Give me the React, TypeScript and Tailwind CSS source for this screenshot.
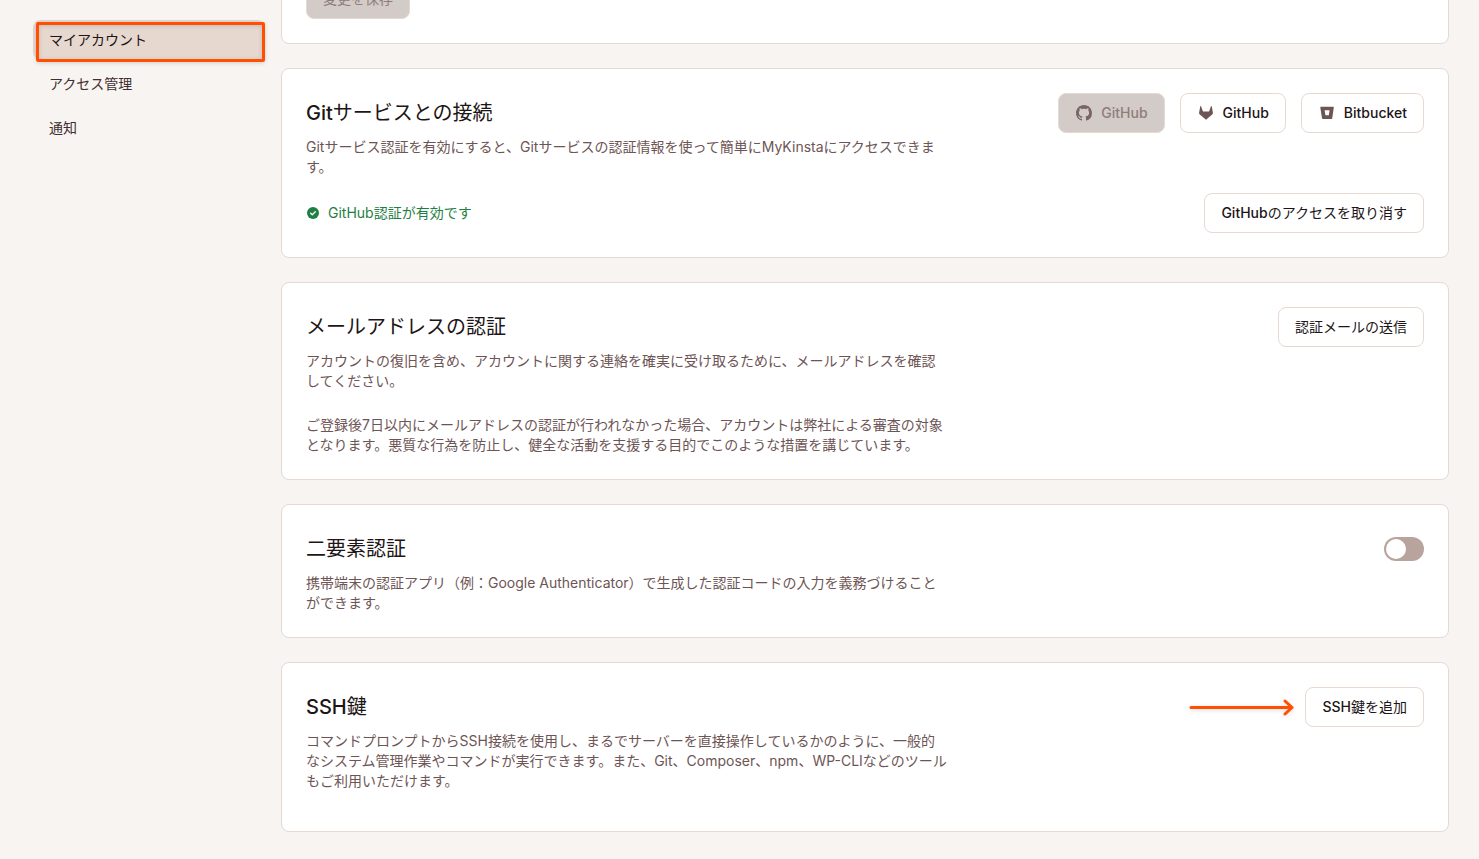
import { useState } from "react";
import type { ReactNode } from "react";

const navItems = [
  { label: "マイアカウント", active: true },
  { label: "アクセス管理", active: false },
  { label: "通知", active: false },
];

function GitHubIcon() {
  return (
    <svg className="h-[18px] w-[18px] text-[#7b6464]" viewBox="-1 -1 18 18" fill="currentColor" aria-hidden="true">
      <path d="M8 0C3.58 0 0 3.58 0 8c0 3.54 2.29 6.53 5.47 7.59.4.07.55-.17.55-.38 0-.19-.01-.82-.01-1.49-2.01.37-2.53-.49-2.69-.94-.09-.23-.48-.94-.82-1.13-.28-.15-.68-.52-.01-.53.63-.01 1.08.58 1.23.82.72 1.21 1.87.87 2.33.66.07-.52.28-.87.51-1.07-1.78-.2-3.64-.89-3.64-3.95 0-.87.31-1.59.82-2.15-.08-.2-.36-1.02.08-2.12 0 0 .67-.21 2.2.82.64-.18 1.32-.27 2-.27s1.36.09 2 .27c1.53-1.04 2.2-.82 2.2-.82.44 1.1.16 1.92.08 2.12.51.56.82 1.27.82 2.15 0 3.07-1.87 3.75-3.65 3.95.29.25.54.73.54 1.48 0 1.07-.01 1.93-.01 2.2 0 .21.15.46.55.38A8.01 8.01 0 0 0 16 8c0-4.42-3.58-8-8-8z" />
    </svg>
  );
}

function GitLabIcon() {
  return (
    <svg className="h-[18px] w-[18px] text-[#6e5555]" viewBox="0 0 18 18" fill="currentColor" aria-hidden="true">
      <path d="M3.3 2.3c.1-.3.6-.3.7 0l2 5.3h6l2-5.3c.1-.3.6-.3.7 0l1.2 6.1c.2.8-.1 1.500-.7 2L9 15.700l-6.200-5.300c-.6-.5-.9-1.200-.7-2z" />
    </svg>
  );
}

function BitbucketIcon() {
  return (
    <svg className="h-[18px] w-[18px] text-[#6e5555]" viewBox="0 0 18 18" fill="currentColor" aria-hidden="true">
      <path
        fillRule="evenodd"
        d="M2.8 2.8h12.600c.3 0 .5.300.4.600l-1.600 11c0 .3-.3.500-.6.500H4.800c-.4 0-.7-.3-.8-.7L2.300 3.400c0-.3.200-.6.500-.6zM6.600 6.300l.8 5h3.400l.8-5z"
      />
    </svg>
  );
}

function CheckCircle() {
  return (
    <svg className="h-3.5 w-3.5" viewBox="0 0 14 14" fill="none" aria-hidden="true">
      <circle cx="7" cy="7" r="6" fill="#1f7f43" />
      <path d="M4.7 7.2l1.6 1.5 3-3" stroke="white" strokeWidth="1.3" strokeLinecap="round" strokeLinejoin="round" />
    </svg>
  );
}

function Arrow() {
  return (
    <svg
      className="h-5 w-[106px] drop-shadow-sm"
      viewBox="0 0 106 20"
      fill="none"
      stroke="#ff4f00"
      strokeWidth="3"
      strokeLinecap="round"
      strokeLinejoin="round"
      aria-hidden="true"
    >
      <path d="M2 10.5h101M96 4l7 6.5-7 6.5" />
    </svg>
  );
}

interface ButtonProps {
  children: ReactNode;
  icon?: ReactNode;
  disabled?: boolean;
}

function Button({ children, icon, disabled }: ButtonProps) {
  return (
    <button
      type="button"
      disabled={disabled}
      className={`flex h-10 shrink-0 items-center whitespace-nowrap rounded-lg border border-[#e6d9d1] px-4 text-sm ${
        disabled ? "bg-[#d2cbc8] text-[#8f7d7a]" : "bg-white text-[#1d1516]"
      }`}
    >
      {icon && <span className="mr-2">{icon}</span>}
      {children}
    </button>
  );
}

// Latin words are set in medium, Japanese stays regular
function Latin({ children }: { children: ReactNode }) {
  return <span className="font-medium">{children}</span>;
}

interface CardProps {
  title: ReactNode;
  actions: ReactNode;
  children: ReactNode;
}

function Card({ title, actions, children }: CardProps) {
  return (
    <section className="rounded-lg border border-[#e6d9d1] bg-white p-6">
      <div className="flex h-10 items-center justify-between">
        <h2 className="text-xl text-[#1d1516]">{title}</h2>
        {actions}
      </div>
      {children}
    </section>
  );
}

function Description({ children }: { children: ReactNode }) {
  return <p className="mt-1 max-w-[642px] text-sm text-[#6e5555]">{children}</p>;
}

export default function App() {
  const [twoFactor, setTwoFactor] = useState(false);

  return (
    <div
      lang="ja"
      className="flex min-h-screen gap-4 overflow-hidden bg-[#f8f4f1] pr-[30px] pb-6 pl-[33px] font-['Inter','Noto_Sans_CJK_JP',sans-serif]"
    >
      <nav className="w-[232px] shrink-0 pt-5">
        <ul className="flex flex-col gap-1">
          {navItems.map((item) => (
            <li key={item.label} className="relative">
              <a
                href="#"
                className={`flex h-10 items-center rounded-lg px-4 text-sm ${
                  item.active ? "bg-[#e6d8cf] text-[#1d1516]" : "text-[#3f2f30]"
                }`}
              >
                {item.label}
              </a>
              {item.active && (
                <span className="pointer-events-none absolute top-0.5 right-0 -bottom-0.5 left-[3px] rounded-xs border-3 border-[#ff4f00] shadow-[0_1px_4px_rgba(60,60,90,0.2),inset_0_1px_4px_rgba(60,60,90,0.2)]" />
              )}
            </li>
          ))}
        </ul>
      </nav>

      <main className="-mt-[46px] flex min-w-0 flex-1 flex-col gap-6">
        <section className="rounded-lg border border-[#e6d9d1] bg-white p-6">
          <Button disabled>変更を保存</Button>
        </section>

        <Card
          title={<><Latin>Git</Latin>サービスとの接続</>}
          actions={
            <div className="flex gap-[15px]">
              <Button disabled icon={<GitHubIcon />}><Latin>GitHub</Latin></Button>
              <Button icon={<GitLabIcon />}><Latin>GitHub</Latin></Button>
              <Button icon={<BitbucketIcon />}><Latin>Bitbucket</Latin></Button>
            </div>
          }
        >
          <Description>
            Gitサービス認証を有効にすると、Gitサービスの認証情報を使って簡単にMyKinstaにアクセスできます。
          </Description>
          <div className="mt-4 flex items-center justify-between">
            <p className="flex items-center gap-2 text-sm text-[#1f7f43]">
              <CheckCircle />
              GitHub認証が有効です
            </p>
            <Button><Latin>GitHub</Latin>のアクセスを取り消す</Button>
          </div>
        </Card>

        <Card title="メールアドレスの認証" actions={<Button>認証メールの送信</Button>}>
          <Description>
            アカウントの復旧を含め、アカウントに関する連絡を確実に受け取るために、メールアドレスを確認してください。
          </Description>
          <p className="mt-6 max-w-[642px] text-sm text-[#6e5555]">
            ご登録後7日以内にメールアドレスの認証が行われなかった場合、アカウントは弊社による審査の対象となります。悪質な行為を防止し、健全な活動を支援する目的でこのような措置を講じています。
          </p>
        </Card>

        <Card
          title="二要素認証"
          actions={
            <input
              type="checkbox"
              role="switch"
              aria-label="二要素認証"
              checked={twoFactor}
              onChange={(e) => setTwoFactor(e.target.checked)}
              className="h-6 w-10 appearance-none rounded-full bg-[#b8a49d] p-0.5 before:block before:h-5 before:w-5 before:rounded-full before:bg-white checked:bg-[#1f7f43] checked:before:translate-x-4"
            />
          }
        >
          <Description>
            携帯端末の認証アプリ（例：Google Authenticator）で生成した認証コードの入力を義務づけることができます。
          </Description>
        </Card>

        <Card
          title={<><Latin>SSH</Latin>鍵</>}
          actions={
            <div className="flex items-center gap-2.5">
              <Arrow />
              <Button><Latin>SSH</Latin>鍵を追加</Button>
            </div>
          }
        >
          <Description>
            コマンドプロンプトからSSH接続を使用し、まるでサーバーを直接操作しているかのように、一般的なシステム管理作業やコマンドが実行できます。また、Git、Composer、npm、WP-CLIなどのツールもご利用いただけます。
          </Description>
          <div className="h-4" />
        </Card>
      </main>
    </div>
  );
}
